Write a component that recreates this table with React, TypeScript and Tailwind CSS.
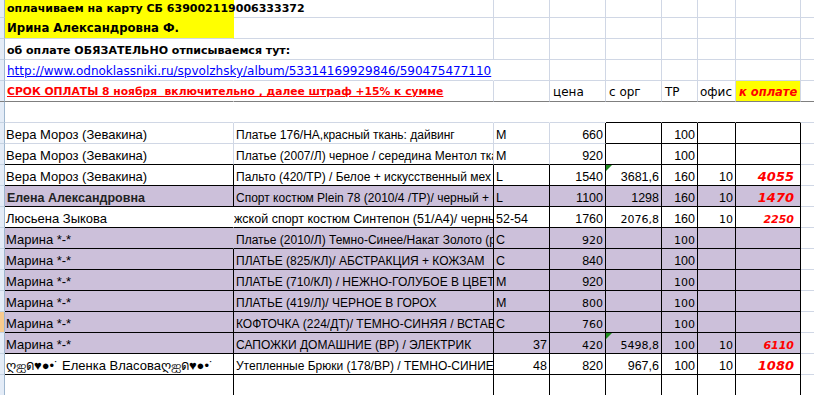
import type { ReactNode } from "react";

const GRID = "grid grid-cols-[5px_229px_260px_56px_56px_56px_36px_38px_65px_1fr]";
const TAHOMA = "font-['DejaVu_Sans',sans-serif]";

const RIGHT: Record<string, string> = {
  g: "border-r-[#d0d7e5]",
  k: "border-r-black",
  n: "border-r-transparent",
};
const BOTTOM: Record<string, string> = {
  g: "border-b-[#d0d7e5]",
  k: "border-b-black",
  n: "border-b-transparent",
  f: "border-b-[#7f7f7f]",
};

const FILL: Record<string, string> = {
  w: "",
  p: "bg-[#ccc0da]",
  y: "bg-[#ffff00]",
};

interface Row {
  fill?: string; // fills for A..H, one char each
  right: string; // A..H
  bottom: string; // A..H
  cells: ReactNode[];
  selected?: boolean;
  header?: boolean;
}

// number cells
const n = (v: string) => <span className="ml-auto pr-[2px] text-[12.5px]">{v}</span>;
const t = (v: string) => <span className={`ml-auto pr-[2px] text-[11px] ${TAHOMA}`}>{v}</span>;
const pay = (v: string, small = false) => (
  <span
    className={
      small
        ? `ml-auto pr-[6px] text-[11px] font-bold italic text-[#ff0000] ${TAHOMA}`
        : `ml-auto pr-[6px] text-[13px] font-bold italic text-[#ff0000] ${TAHOMA}`
    }
  >
    {v}
  </span>
);
const comment = (
  <svg className="absolute left-0 top-0" width="6" height="6" viewBox="0 0 6 6">
    <polygon points="0,0 6,0 0,6" fill="#1e8a1e" />
  </svg>
);
const name = (v: string, bold = false) => (
  <span className={bold ? "pl-[2px] text-[12.5px] font-bold text-[#222]" : "pl-[1px] text-[13px]"}>{v}</span>
);
const desc = (v: string, pad = true) => (
  <span className={pad ? "pl-[2px] text-[12px]" : "text-[12.5px]"}>{v}</span>
);
const size = (v: string) => <span className="pl-[2px] text-[12.5px]">{v}</span>;
const label = (v: string) => <span className={`pl-[3px] text-[12px] ${TAHOMA}`}>{v}</span>;

const rows: Row[] = [
  {
    header: true,
    fill: "ywwwwwww",
    right: "nggggggg",
    bottom: "nggggggg",
    cells: [<span className={`pl-[2px] text-[11px] font-bold ${TAHOMA}`}>оплачиваем на карту СБ 639002119006333372</span>],
  },
  {
    header: true,
    fill: "ywwwwwww",
    right: "nggggggg",
    bottom: "gggggggg",
    cells: [<span className={`pl-[2px] text-[11.7px] font-bold ${TAHOMA}`}>Ирина Александровна Ф.</span>],
  },
  {
    header: true,
    right: "nggggggg",
    bottom: "gggggggg",
    cells: [<span className={`pl-[2px] text-[11px] font-bold ${TAHOMA}`}>об оплате ОБЯЗАТЕЛЬНО отписываемся тут:</span>],
  },
  {
    header: true,
    right: "nngggggg",
    bottom: "gggggggg",
    cells: [
      <span className={`pl-[2px] text-[12px] text-[#0000ff] underline ${TAHOMA}`}>
        http://www.odnoklassniki.ru/spvolzhsky/album/53314169929846/590475477110
      </span>,
    ],
  },
  {
    header: true,
    fill: "wwwwwwwy",
    right: "nggggggg",
    bottom: "ffffffff",
    cells: [
      <span className={`pl-[2px] text-[10.75px] font-bold text-[#ff0000] underline ${TAHOMA}`}>
        СРОК ОПЛАТЫ 8 ноября&nbsp; включительно , далее штраф +15% к сумме
      </span>,
      "",
      "",
      label("цена"),
      label("с орг"),
      label("ТР"),
      <span className={`pl-[2px] text-[12px] ${TAHOMA}`}>офис</span>,
      <span className={`pl-[3px] text-[11.5px] font-bold italic text-[#ff0000] ${TAHOMA}`}>к оплате</span>,
    ],
  },
  { right: "nnnnnnnn", bottom: "ggggkkkk", cells: [] },
  {
    right: "gggkkkkk",
    bottom: "ggggkkkk",
    cells: [name("Вера Мороз (Зевакина)"), desc("Платье 176/НА,красный ткань: дайвинг"), size("M"), n("660"), "", n("100")],
  },
  {
    right: "gggkkkkk",
    bottom: "kkkkkkkk",
    cells: [name("Вера Мороз (Зевакина)"), desc("Платье (2007/Л) черное / середина Ментол ткань"), size("M"), n("920"), "", n("100")],
  },
  {
    right: "kkkkkkkk",
    bottom: "kkkkkkkk",
    cells: [
      name("Вера Мороз (Зевакина)"),
      desc("Пальто (420/ТР) / Белое + искусственный мех"),
      size("L"),
      n("1540"),
      <>{comment}{n("3681,6")}</>,
      n("160"),
      n("10"),
      pay("4055"),
    ],
  },
  {
    fill: "pppppppp",
    right: "kkkkkkkk",
    bottom: "kkkkkkkk",
    cells: [
      name("Елена Александровна", true),
      desc("Спорт костюм Plein 78 (2010/4 /ТР)/ черный + белый"),
      size("L"),
      n("1100"),
      n("1298"),
      n("160"),
      n("10"),
      pay("1470"),
    ],
  },
  {
    right: "nkkkkkkk",
    bottom: "kkkkkkkk",
    cells: [
      name("Люсьена Зыкова"),
      desc("жской спорт костюм Синтепон (51/А4)/ черный", false),
      size("52-54"),
      n("1760"),
      t("2076,8"),
      n("160"),
      t("10"),
      pay("2250", true),
    ],
  },
  {
    fill: "pppppppp",
    right: "nkkkkkkk",
    bottom: "kkkkkkkk",
    cells: [name("Марина *-*"), desc("Платье (2010/Л) Темно-Синее/Накат Золото (р-р 50)"), size("C"), t("920"), "", t("100")],
  },
  {
    fill: "pppppppp",
    right: "kkkkkkkk",
    bottom: "kkkkkkkk",
    cells: [name("Марина *-*"), desc("ПЛАТЬЕ (825/КЛ)/ АБСТРАКЦИЯ + КОЖЗАМ"), size("C"), n("840"), "", n("100")],
  },
  {
    fill: "pppppppp",
    right: "kkkkkkkk",
    bottom: "kkkkkkkk",
    cells: [name("Марина *-*"), desc("ПЛАТЬЕ (710/КЛ) / НЕЖНО-ГОЛУБОЕ В ЦВЕТОЧЕК"), size("M"), n("920"), "", t("100")],
  },
  {
    fill: "pppppppp",
    right: "kkkkkkkk",
    bottom: "kkkkkkkk",
    cells: [name("Марина *-*"), desc("ПЛАТЬЕ (419/Л)/ ЧЕРНОЕ В ГОРОХ"), size("M"), t("800"), "", t("100")],
  },
  {
    fill: "pppppppp",
    selected: true,
    right: "kkkkkkkk",
    bottom: "kkkkkkkk",
    cells: [name("Марина *-*"), desc("КОФТОЧКА (224/ДТ)/ ТЕМНО-СИНЯЯ / ВСТАВКИ"), size("C"), t("760"), "", t("100")],
  },
  {
    fill: "pppppppp",
    right: "kkkkkkkk",
    bottom: "kkkkkkkk",
    cells: [
      name("Марина *-*"),
      desc("САПОЖКИ ДОМАШНИЕ (ВР) / ЭЛЕКТРИК"),
      n("37"),
      t("420"),
      <>{comment}{t("5498,8")}</>,
      t("100"),
      t("10"),
      pay("6110", true),
    ],
  },
  {
    right: "kkkkkkkk",
    bottom: "kkkkkkkk",
    cells: [
      name("ღஐด♥●•˙ Еленка Власоваღஐด♥●•˙"),
      desc("Утепленные Брюки (178/ВР) / ТЕМНО-СИНИЕ"),
      n("48"),
      n("820"),
      n("967,6"),
      n("100"),
      n("10"),
      pay("1080"),
    ],
  },
  { right: "kkkkkkkk", bottom: "kkkkkkkk", cells: [] },
];

export default function App() {
  return (
    <div className="h-[395px] w-[814px] overflow-hidden bg-white font-['Liberation_Sans',Arial,sans-serif] text-black">
      {rows.map((row, i) => {
        const height = i === 0 ? "h-[18px]" : "h-[21px]";
        const pad = row.header ? "pb-[3px]" : "pb-[2px]";
        const freeze = row.bottom[0] === "f";
        return (
          <div key={i} className={`${GRID} ${height}`}>
            <div
              className={`border-r border-b border-r-[#9eb6ce] ${freeze ? "border-b-[#7f7f7f]" : "border-b-[#c5d3e3]"} ${
                row.selected ? "bg-[#f8cb8f]" : "bg-[#e4ecf7]"
              }`}
            />
            {Array.from({ length: 8 }).map((_, c) => {
              const fill = FILL[(row.fill ?? "wwwwwwww")[c]];
              const clip = row.header && c < 2 ? "overflow-visible" : "overflow-hidden";
              return (
                <div
                  key={c}
                  className={`relative flex items-end whitespace-nowrap leading-none border-r border-b ${pad} ${clip} ${
                    RIGHT[row.right[c]]
                  } ${BOTTOM[row.bottom[c]]} ${fill}`}
                >
                  {row.cells[c] ?? null}
                </div>
              );
            })}
            <div className={`border-b ${freeze ? "border-b-[#7f7f7f]" : "border-b-[#d0d7e5]"}`} />
          </div>
        );
      })}
    </div>
  );
}
